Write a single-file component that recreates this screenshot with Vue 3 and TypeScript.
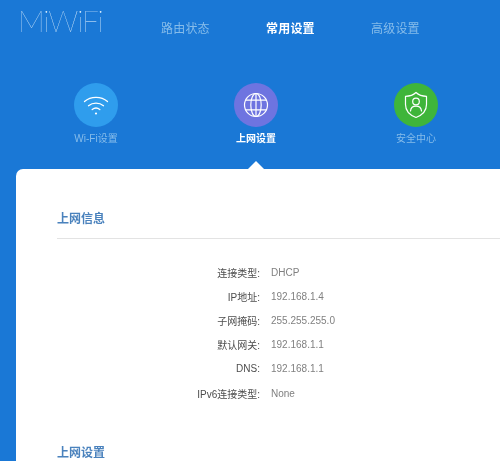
<script setup lang="ts">
// Router admin page: top nav, three setting shortcuts, and the connection info card.
const navItems = [
  { label: "路由状态", active: false },
  { label: "常用设置", active: true },
  { label: "高级设置", active: false },
];

const infoRows = [
  { label: "连接类型:", value: "DHCP" },
  { label: "IP地址:", value: "192.168.1.4" },
  { label: "子网掩码:", value: "255.255.255.0" },
  { label: "默认网关:", value: "192.168.1.1" },
  { label: "DNS:", value: "192.168.1.1" },
  { label: "IPv6连接类型:", value: "None" },
];
</script>

<template>
  <div class="page">
    <header class="topbar">
      <div class="logo">MiWiFi</div>
      <nav class="nav">
        <a v-for="item in navItems" :key="item.label" class="nav-item" :class="{ active: item.active }">
          {{ item.label }}
        </a>
      </nav>
    </header>

    <section class="shortcuts">
      <div class="shortcut">
        <div class="badge wifi">
          <svg width="26" height="26" viewBox="0 0 26 26" fill="none" stroke="#fff" stroke-width="1.3" stroke-linecap="round">
            <path d="M1.5 9.5C7.8 3.9 18.2 3.9 24.500 9.500" />
            <path d="M5.500 13.700C9.800 10.200 16.200 10.200 20.500 13.700" />
            <path d="M9.200 17.500C11.400 15.800 14.600 15.800 16.800 17.500" />
            <circle cx="13" cy="21.500" r="1.100" fill="#fff" stroke="none" />
          </svg>
        </div>
        <span class="shortcut-label">Wi-Fi设置</span>
      </div>
      <div class="shortcut active">
        <div class="badge globe">
          <svg width="26" height="26" viewBox="0 0 26 26" fill="none" stroke="#fff" stroke-width="1.200">
            <circle cx="13" cy="13" r="11.500" />
            <ellipse cx="13" cy="13" rx="5.200" ry="11.500" />
            <path d="M13 1.500V24.500M2.800 8.200H23.200M2.800 17.800H23.200" />
          </svg>
        </div>
        <span class="shortcut-label">上网设置</span>
      </div>
      <div class="shortcut">
        <div class="badge shield">
          <svg width="26" height="28" viewBox="0 0 26 28" fill="none" stroke="#fff" stroke-width="1.200" stroke-linejoin="round" stroke-linecap="round">
            <path d="M13 1.500C15.500 3.800 19.500 5.200 23.500 5.300V13.500C23.500 19.500 19.500 24 13 26.500C6.500 24 2.500 19.500 2.500 13.500V5.300C6.500 5.200 10.500 3.800 13 1.500Z" />
            <circle cx="13" cy="10.500" r="3.300" />
            <path d="M7.500 20C7.800 16.800 10 15.200 13 15.200C16 15.200 18.200 16.800 18.500 20" />
          </svg>
        </div>
        <span class="shortcut-label">安全中心</span>
      </div>
    </section>

    <main class="card">
      <h2 class="section-title first">上网信息</h2>
      <div class="rule"></div>
      <dl class="info">
        <div v-for="row in infoRows" :key="row.label" class="info-row">
          <dt>{{ row.label }}</dt>
          <dd>{{ row.value }}</dd>
        </div>
      </dl>
      <h2 class="section-title">上网设置</h2>
    </main>
  </div>
</template>

<style scoped>
.page {
  width: 500px;
  height: 461px;
  overflow: hidden;
  display: flex;
  flex-direction: column;
  background: #1a78d6;
  font-family: "Liberation Sans", "Noto Sans CJK SC", sans-serif;
}

/* the reference is a soft, upscaled photo */
.logo,
.nav,
.badge,
.shortcut-label,
.section-title,
.info {
  filter: blur(0.45px);
}

.topbar {
  height: 83px;
  flex: none;
  display: flex;
  padding-left: 18px;
}

.logo {
  width: 143px;
  height: 40px;
  font-family: Lato, "Open Sans", sans-serif;
  font-weight: 100;
  font-size: 30px;
  line-height: 40px;
  color: #e4f2fd;
  letter-spacing: -1.200px;
}

.nav {
  display: flex;
  gap: 56px;
  padding-top: 21px;
}

.nav-item {
  width: 49px;
  font-size: 12px;
  line-height: 16px;
  white-space: nowrap;
  letter-spacing: 0.2px;
  color: #86bcea;
}

.nav-item.active {
  color: #fff;
  font-weight: 700;
}

.shortcuts {
  height: 86px;
  flex: none;
  display: grid;
  grid-template-columns: 160px 160px 160px;
  padding-left: 16px;
}

.shortcut {
  position: relative;
  display: flex;
  flex-direction: column;
  align-items: center;
  gap: 5px;
}

.shortcut.active::after {
  content: "";
  position: absolute;
  left: 50%;
  bottom: 0;
  margin-left: -8px;
  border-left: 8px solid transparent;
  border-right: 8px solid transparent;
  border-bottom: 8px solid #fff;
}

.badge {
  width: 44px;
  height: 44px;
  border-radius: 50%;
  display: flex;
  align-items: center;
  justify-content: center;
}

.wifi {
  background: #2f9ded;
}

.globe {
  background: #6e74e0;
}

.shield {
  background: #3fb53a;
}

.shortcut-label {
  font-size: 10px;
  line-height: 14px;
  color: #86bcea;
}

.shortcut.active .shortcut-label {
  color: #fff;
  font-weight: 700;
}

.card {
  flex: 1;
  margin-left: 16px;
  padding-left: 41px;
  background: #fff;
  border-top-left-radius: 7px;
}

.section-title {
  margin: 0;
  font-size: 12px;
  line-height: 16px;
  font-weight: 700;
  color: #4a82bd;
}

.section-title.first {
  margin-top: 42px;
}

.rule {
  height: 1px;
  margin-top: 11px;
  background: #e3e3e3;
}

.info {
  margin: 21px 0 40px;
}

.info-row {
  display: flex;
  height: 24.200px;
  align-items: center;
  font-size: 10px;
}

.info-row dt {
  width: 203px;
  text-align: right;
  color: #4d4d4d;
}

.info-row dd {
  margin: 0 0 0 11px;
  color: #808080;
}
</style>
